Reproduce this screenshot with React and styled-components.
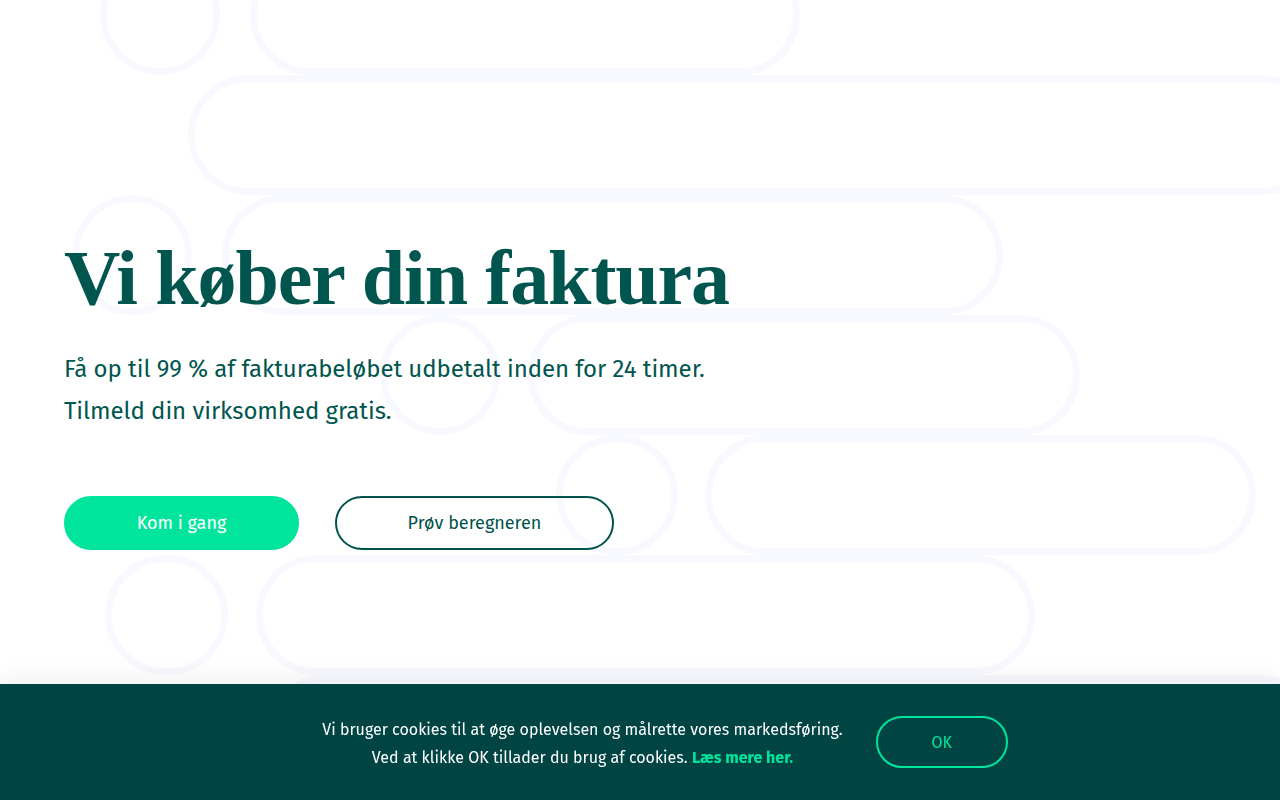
import React from "react";
import styled, { createGlobalStyle } from "styled-components";

// outer bounds of each decorative shape: row index, left, right
const shapes = [
    [0, 100, 220],
    [0, 250, 800],
    [1, 188, 1320],
    [2, 72, 192],
    [2, 222, 1003],
    [3, 380, 500],
    [3, 528, 1080],
    [4, 556, 678],
    [4, 705, 1256],
    [5, 105, 228],
    [5, 256, 1035],
    [6, 265, 1320],
];

const ROW_H = 120;
const FIRST_ROW = -45;
const STROKE = 7;

function Pattern() {
    return (
        <Backdrop viewBox="0 0 1280 800" preserveAspectRatio="xMinYMin slice">
            {shapes.map(([row, x0, x1], i) => (
                <rect
                    key={i}
                    x={x0 + STROKE / 2}
                    y={FIRST_ROW + row * ROW_H + STROKE / 2}
                    width={x1 - x0 - STROKE}
                    height={ROW_H - STROKE}
                    rx={(ROW_H - STROKE) / 2}
                    fill="none"
                    stroke="#f8f9fe"
                    strokeWidth={STROKE}
                />
            ))}
        </Backdrop>
    );
}

function App() {
    return (
        <>
            <GlobalStyle />
            <Page>
                <Pattern />
                <Hero>
                    <Title>Vi køber din faktura</Title>
                    <Lead>
                        Få op til 99 % af fakturabeløbet udbetalt inden for 24 timer.
                        <br />
                        Tilmeld din virksomhed gratis.
                    </Lead>
                    <Actions>
                        <Button primary>Kom i gang</Button>
                        <Button>Prøv beregneren</Button>
                    </Actions>
                </Hero>
            </Page>
            <CookieBar>
                <CookieText>
                    Vi bruger cookies til at øge oplevelsen og målrette vores markedsføring.
                    <br />
                    Ved at klikke OK tillader du brug af cookies. <a href="#">Læs mere her.</a>
                </CookieText>
                <OkButton>OK</OkButton>
            </CookieBar>
        </>
    );
}

export default App;

const GlobalStyle = createGlobalStyle`
    html, body {
        margin: 0;
        padding: 0;
        background: #ffffff;
        font-family: "Fira Sans", Lato, "Open Sans", sans-serif;
    }
    * {
        box-sizing: border-box;
    }
`;

const Page = styled.main`
    position: relative;
    min-height: 800px;
    overflow: hidden;
`;

const Backdrop = styled.svg`
    position: absolute;
    top: 0;
    left: 0;
    width: 100%;
    height: 800px;
    z-index: 0;
`;

const Hero = styled.section`
    position: relative;
    z-index: 1;
    display: flex;
    flex-direction: column;
    align-items: flex-start;
    padding: 235px 64px 0;
`;

const Title = styled.h1`
    margin: 0;
    font-family: "Liberation Serif", "DejaVu Serif", serif;
    font-weight: 700;
    font-size: 78px;
    line-height: 86px;
    letter-spacing: -1.1px;
    color: #00564f;
`;

const Lead = styled.p`
    margin: 27px 0 0;
    font-size: 24px;
    line-height: 42px;
    letter-spacing: -0.05px;
    color: #00564f;
`;

const Actions = styled.div`
    display: flex;
    gap: 36px;
    margin-top: 64px;
`;

const Button = styled.button`
    height: 54px;
    width: ${(props) => (props.primary ? "235px" : "279px")};
    border-radius: 27px;
    border: 2px solid ${(props) => (props.primary ? "#00e59b" : "#00524c")};
    background: ${(props) => (props.primary ? "#00e59b" : "transparent")};
    color: ${(props) => (props.primary ? "#ffffff" : "#00524c")};
    font-family: inherit;
    font-size: 18px;
    cursor: pointer;
`;

const CookieBar = styled.div`
    position: fixed;
    left: 0;
    right: 0;
    bottom: 0;
    height: 116px;
    z-index: 5;
    display: flex;
    align-items: center;
    justify-content: center;
    gap: 33px;
    padding-left: 50px;
    background: #004443;
    box-shadow: 0 -4px 24px rgba(0, 0, 0, 0.07);
`;

const CookieText = styled.p`
    margin: 3px 0 0;
    text-align: center;
    color: #ffffff;
    font-size: 16px;
    line-height: 28px;
    a {
        color: #00e59b;
        font-weight: 700;
        text-decoration: none;
    }
`;

const OkButton = styled.button`
    width: 132px;
    height: 52px;
    border-radius: 26px;
    border: 2px solid #00e59b;
    background: transparent;
    color: #00e59b;
    font-family: inherit;
    font-size: 16px;
    cursor: pointer;
`;
